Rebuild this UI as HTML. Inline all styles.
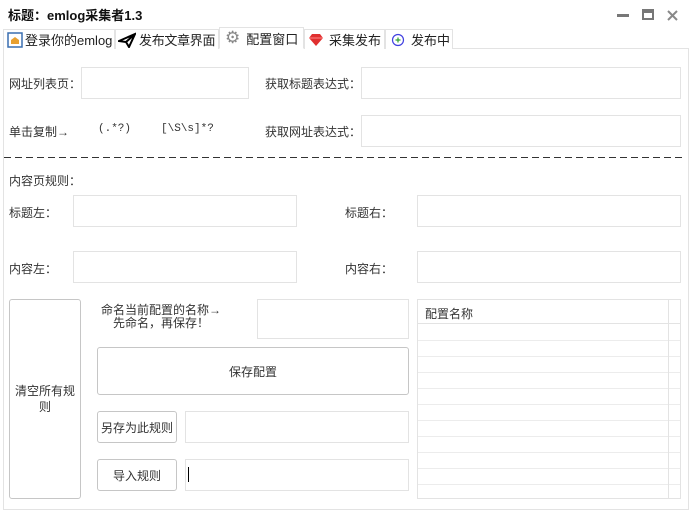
<!DOCTYPE html><html><head><meta charset="utf-8"><style>
*{margin:0;padding:0;box-sizing:border-box}
body{width:690px;height:507px;background:#fff;font-family:"Liberation Sans","Noto Sans CJK SC",sans-serif;font-size:12px;color:#333;position:relative;overflow:hidden}
.a{position:absolute;white-space:nowrap}
.in{position:absolute;border:1px solid #e3e3e3;background:#fff}
.btn{position:absolute;border:1px solid #c6c6c6;border-radius:3px;background:#fff;display:flex;align-items:center;justify-content:center;text-align:center;color:#333}
.tab{position:absolute;top:29px;height:20px;border:1px solid #e3e3e3;border-bottom:none;background:#fff;font-size:13px;color:#222;display:flex;align-items:center;padding-left:3px;white-space:nowrap;overflow:visible}
</style></head><body>
<div class="a" style="left:8px;top:5px;font-size:13px;font-weight:bold;color:#111">标题：emlog采集者1.3</div>
<div class="a" style="left:617px;top:14px;width:12px;height:3px;background:#777"></div>
<div class="a" style="left:642px;top:9px;width:12px;height:11px;border:2px solid #777;border-top-width:4px"></div>
<svg class="a" style="left:667px;top:10px" width="11" height="11"><path d="M1 1L10 10M10 1L1 10" stroke="#888" stroke-width="2"/></svg>
<div class="a" style="left:3px;top:48px;width:686px;height:462px;border:1px solid #e3e3e3"></div>
<div class="tab" style="left:3px;width:112px"><svg width="16" height="16" style="margin-right:2px;flex:none"><rect x="1" y="1" width="14" height="14" fill="#fff" stroke="#3a6fb0" stroke-width="1.5"/><path d="M4 12V8l4-3 4 3v4z" fill="#e8a030"/></svg>登录你的emlog</div>
<div class="tab" style="left:115px;width:104px;padding-left:2px;letter-spacing:-0.3px"><svg width="18" height="16" style="margin-right:3px;flex:none"><path d="M1 9L17 2 11 15 8 10z M8 10L17 2" fill="none" stroke="#000" stroke-width="2"/></svg>发布文章界面</div>
<div class="tab" style="left:219px;top:27px;height:22px;width:85px;border-bottom:1px solid #fff"><span style="color:#888;font-size:17px;margin:0 6px 0 2px">⚙</span>配置窗口</div>
<div class="tab" style="left:304px;width:81px"><svg width="16" height="14" style="margin-right:5px;flex:none"><path d="M1 5L4 1H12L15 5 8 13z" fill="#e03030"/><path d="M1 5H15" stroke="#f88" /></svg>采集发布</div>
<div class="tab" style="left:385px;width:68px"><svg width="14" height="14" style="margin:0 6px 0 2px;flex:none"><circle cx="7" cy="7" r="5.5" fill="none" stroke="#4040e0" stroke-width="1.2"/><path d="M7 4.5v5M4.5 7h5" stroke="#30a030" stroke-width="1.2"/></svg>发布中</div>

<div class="a" style="left:9px;top:75px">网址列表页：</div><div class="in" style="left:81px;top:67px;width:168px;height:32px"></div>
<div class="a" style="left:265px;top:75px">获取标题表达式：</div><div class="in" style="left:361px;top:67px;width:320px;height:32px"></div>
<div class="a" style="left:9px;top:123px">单击复制→</div>
<div class="a" style="left:98px;top:123px;font-family:'Liberation Mono',monospace;font-size:11px">(.*?)</div>
<div class="a" style="left:161px;top:123px;font-family:'Liberation Mono',monospace;font-size:11px">[\S\s]*?</div>
<div class="a" style="left:265px;top:123px">获取网址表达式：</div><div class="in" style="left:361px;top:115px;width:320px;height:32px"></div>
<div class="a" style="left:4px;top:157px;width:682px;height:1px;background:repeating-linear-gradient(90deg,#333 0 7px,transparent 7px 11px)"></div>
<div class="a" style="left:9px;top:172px">内容页规则：</div>
<div class="a" style="left:9px;top:204px">标题左：</div><div class="in" style="left:73px;top:195px;width:224px;height:32px"></div>
<div class="a" style="left:345px;top:204px">标题右：</div><div class="in" style="left:417px;top:195px;width:264px;height:32px"></div>
<div class="a" style="left:9px;top:260px">内容左：</div><div class="in" style="left:73px;top:251px;width:224px;height:32px"></div>
<div class="a" style="left:345px;top:260px">内容右：</div><div class="in" style="left:417px;top:251px;width:264px;height:32px"></div>

<div class="btn" style="left:9px;top:299px;width:72px;height:200px;padding:0 4px;white-space:normal;line-height:16px">清空所有规则</div>
<div class="a" style="left:101px;top:304px;line-height:13px;text-align:center">命名当前配置的名称→<br>先命名，再保存！</div>
<div class="in" style="left:257px;top:299px;width:152px;height:40px"></div>
<div class="btn" style="left:97px;top:347px;width:312px;height:48px">保存配置</div>
<div class="btn" style="left:97px;top:411px;width:80px;height:32px">另存为此规则</div>
<div class="in" style="left:185px;top:411px;width:224px;height:32px"></div>
<div class="btn" style="left:97px;top:459px;width:80px;height:32px">导入规则</div>
<div class="in" style="left:185px;top:459px;width:224px;height:32px"></div>
<div class="a" style="left:188px;top:467px;width:1px;height:15px;background:#000"></div>

<div class="in" style="left:417px;top:299px;width:264px;height:200px;background:repeating-linear-gradient(180deg,#fff 0 15px,#ececec 15px 16px);background-position:0 25px"></div>
<div class="a" style="left:418px;top:300px;width:262px;height:24px;background:#fff;border-bottom:1px solid #e3e3e3"></div>
<div class="a" style="left:425px;top:305px">配置名称</div>
<div class="a" style="left:668px;top:300px;width:1px;height:198px;background:#e3e3e3"></div>
</body></html>
